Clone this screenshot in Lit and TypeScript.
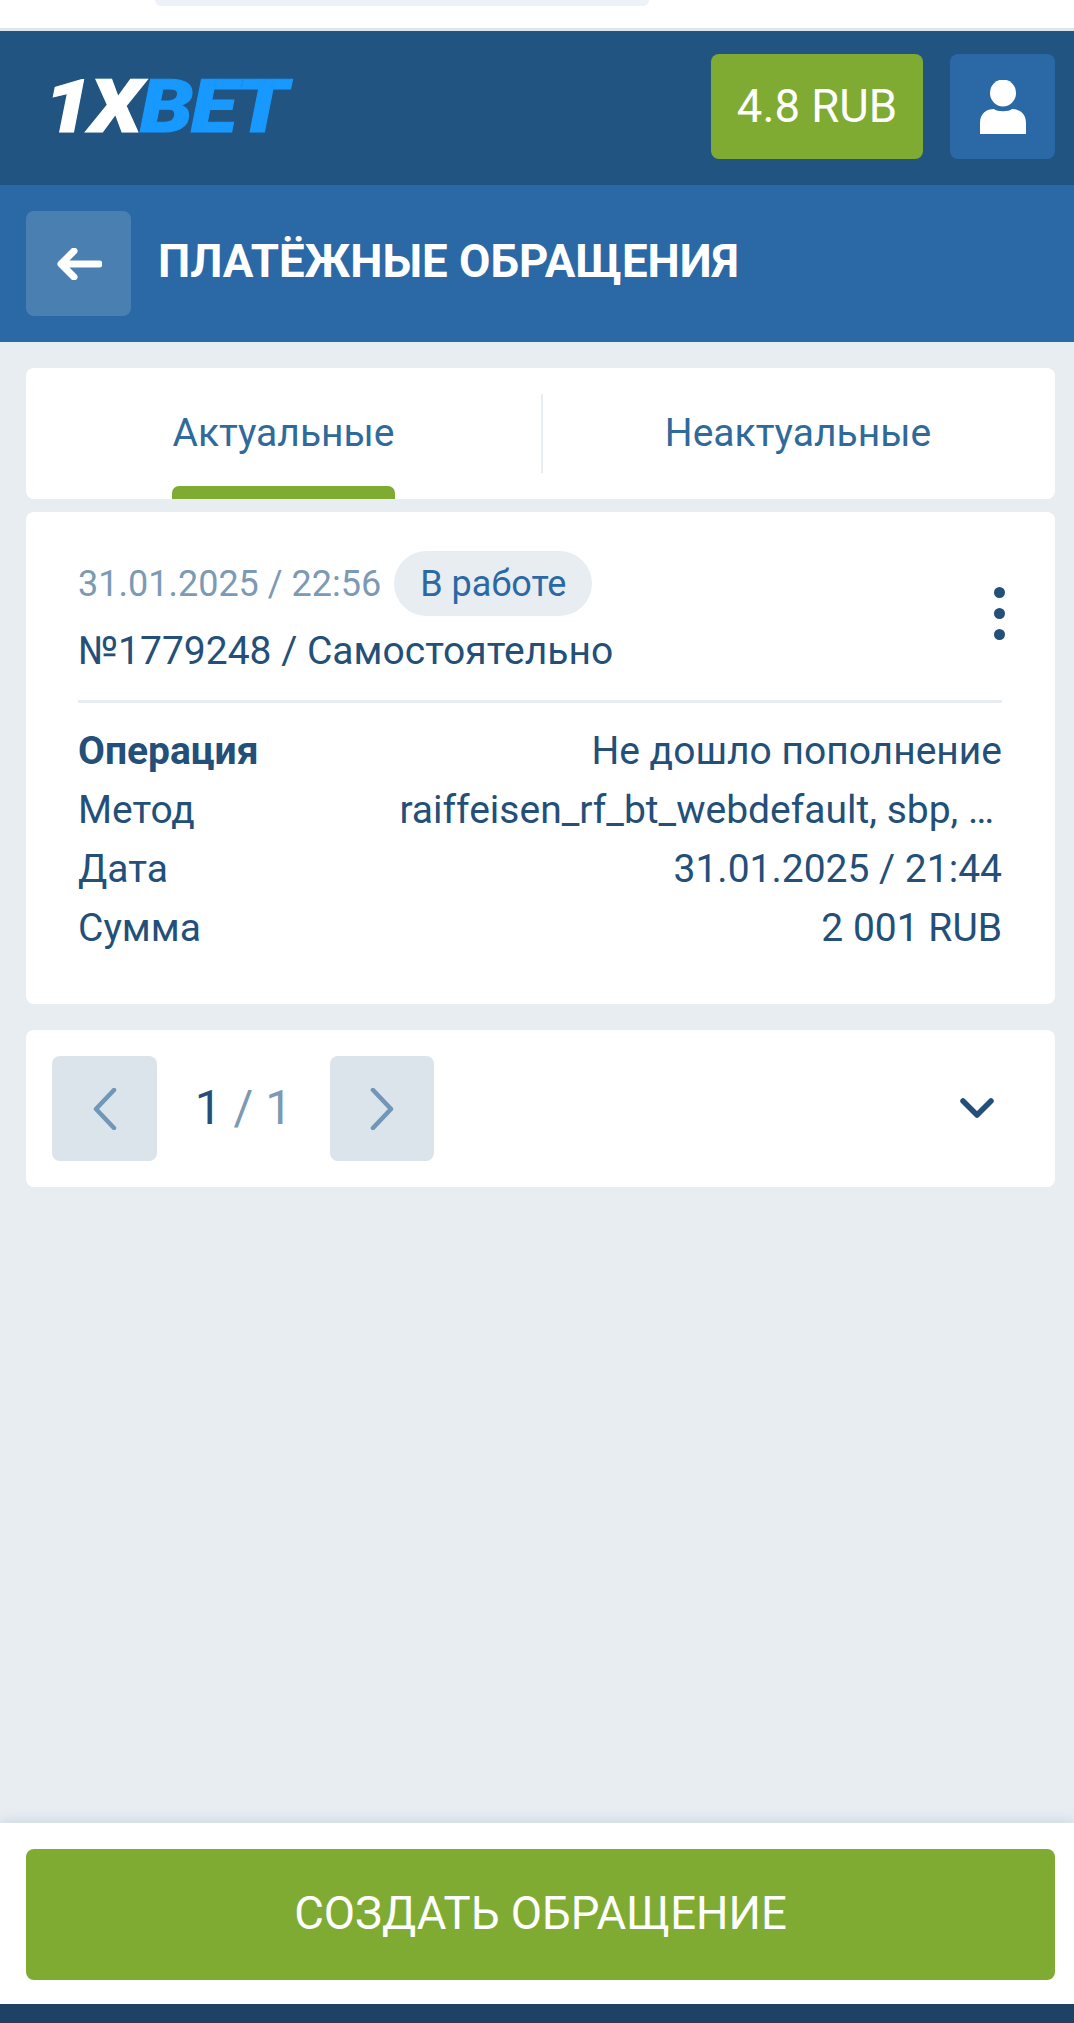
import { css, html, LitElement } from "lit";
import { customElement } from "lit/decorators.js";

@customElement("app-root")
class AppRoot extends LitElement {
    render() {
        return html`
      <div class="status"><span class="url-pill"></span></div>
      <header class="top">
        <div class="logo"><span class="logo-white">1X</span><span class="logo-blue">BET</span></div>
        <div class="balance">4.8 RUB</div>
        <button class="user" aria-label="Профиль">
          <svg width="48" height="54" viewBox="0 0 48 54">
            <ellipse cx="24" cy="13" rx="13" ry="13.5" fill="#fff" />
            <path d="M1 54V43C1 33 8 29 15 29C18 32 30 32 33 29C40 29 47 33 47 43V54Z" fill="#fff" />
          </svg>
        </button>
      </header>
      <div class="title-bar">
        <button class="back" aria-label="Назад">
          <svg width="46" height="32" viewBox="0 0 46 32">
            <path d="M18 3L5 16L18 29M6 16H43" fill="none" stroke="#fff" stroke-width="7" stroke-linecap="round" stroke-linejoin="round" />
          </svg>
        </button>
        <h1>ПЛАТЁЖНЫЕ ОБРАЩЕНИЯ</h1>
      </div>
      <main>
        <nav class="card tabs">
          <a class="tab active"><span>Актуальные</span></a>
          <i class="tab-line"></i>
          <a class="tab"><span>Неактуальные</span></a>
        </nav>
        <section class="card ticket">
          <div class="ticket-head">
            <div>
              <div class="meta">
                <span class="date">31.01.2025 / 22:56</span>
                <span class="badge">В работе</span>
              </div>
              <div class="number">№1779248 / Самостоятельно</div>
            </div>
            <div class="dots"><i></i><i></i><i></i></div>
          </div>
          <dl>
            <div><dt class="strong">Операция</dt><dd>Не дошло пополнение</dd></div>
            <div><dt>Метод</dt><dd class="method">raiffeisen_rf_bt_webdefault, sbp, …</dd></div>
            <div><dt>Дата</dt><dd>31.01.2025 / 21:44</dd></div>
            <div><dt>Сумма</dt><dd>2 001 RUB</dd></div>
          </dl>
        </section>
        <section class="card pager">
          <button class="page-btn" aria-label="Назад">
            <svg width="24" height="42" viewBox="0 0 24 42"><path d="M21 2L3 21L21 40" fill="none" stroke="#7096b8" stroke-width="4.5" stroke-linecap="round" stroke-linejoin="round" /></svg>
          </button>
          <div class="pages"><span class="cur">1</span><span class="total"> / 1</span></div>
          <button class="page-btn" aria-label="Вперёд">
            <svg width="24" height="42" viewBox="0 0 24 42"><path d="M3 2L21 21L3 40" fill="none" stroke="#7096b8" stroke-width="4.5" stroke-linecap="round" stroke-linejoin="round" /></svg>
          </button>
          <svg class="chevron" width="34" height="21" viewBox="0 0 34 21"><path d="M3 3L17 17L31 3" fill="none" stroke="#234f78" stroke-width="5.5" stroke-linecap="round" stroke-linejoin="round" /></svg>
        </section>
      </main>
      <footer>
        <button class="create">СОЗДАТЬ ОБРАЩЕНИЕ</button>
      </footer>
      <div class="bottom"></div>
    `;
    }

    static styles = css`
    :host {
        display: flex;
        flex-direction: column;
        min-height: 100vh;
        background: #e8edf2;
        font-family: Roboto, "Liberation Sans", sans-serif;
        color: #234f78;
    }
    button {
        border: 0;
        padding: 0;
        font-family: inherit;
        display: flex;
        align-items: center;
        justify-content: center;
    }
    .status {
        height: 28px;
        background: #fff;
        border-bottom: 3px solid #dde5ec;
        display: flex;
        align-items: flex-start;
        justify-content: center;
        padding-right: 270px;
    }
    .url-pill {
        width: 494px;
        height: 6px;
        background: #edf1f8;
        border-radius: 0 0 20px 20px;
    }
    .top {
        height: 154px;
        box-sizing: border-box;
        background: #225481;
        display: flex;
        align-items: center;
        padding: 0 19px 3px 44px;
    }
    .logo {
        font-size: 74px;
        font-weight: 900;
        font-style: italic;
        line-height: 1;
        letter-spacing: -2px;
        margin-right: auto;
        transform: scaleX(1.15);
        transform-origin: left center;
        -webkit-text-stroke: 1px currentColor;
    }
    .logo-white {
        color: #fff;
    }
    .logo-blue {
        color: #1799ff;
    }
    .balance {
        width: 212px;
        height: 105px;
        background: #7fab32;
        border-radius: 8px;
        color: #fff;
        font-size: 45.5px;
        display: flex;
        align-items: center;
        justify-content: center;
    }
    .user {
        width: 105px;
        height: 105px;
        margin-left: 27px;
        background: #2a69a5;
        border-radius: 8px;
    }
    .title-bar {
        height: 157px;
        background: #2a69a5;
        display: flex;
        align-items: center;
        padding-left: 26px;
        gap: 27px;
    }
    .back {
        width: 105px;
        height: 105px;
        background: #4a7fb2;
        border-radius: 8px;
    }
    h1 {
        margin: 0 0 5px;
        color: #fff;
        font-size: 45.6px;
        font-weight: 700;
    }
    main {
        flex: 1;
        padding: 26px 19px 0 26px;
        display: flex;
        flex-direction: column;
    }
    .card {
        background: #fff;
        border-radius: 8px;
    }
    .tabs {
        height: 131px;
        display: flex;
        align-items: flex-start;
        overflow: hidden;
    }
    .tab {
        flex: 1;
        height: 131px;
        display: flex;
        justify-content: center;
        color: #2f6a9b;
        font-size: 39px;
    }
    .tab.active {
        flex: 0 0 515px;
    }
    .tab:last-child {
        padding-right: 2px;
    }
    .tab span {
        height: 131px;
        box-sizing: border-box;
        padding-top: 40px;
        line-height: 50px;
        display: flex;
        flex-direction: column;
    }
    .tab.active span::after {
        content: "";
        margin-top: auto;
        height: 13px;
        background: #7fab32;
        border-radius: 7px 7px 0 0;
    }
    .tab-line {
        width: 2px;
        height: 79px;
        margin-top: 26px;
        background: #e8edf2;
    }
    .ticket {
        margin-top: 13px;
        height: 492px;
        box-sizing: border-box;
        padding: 39px 53px 0 52px;
    }
    .ticket-head {
        display: flex;
        justify-content: space-between;
        align-items: flex-start;
        height: 149px;
        border-bottom: 3px solid #e8edf2;
    }
    .meta {
        display: flex;
        align-items: center;
        gap: 13px;
    }
    .date {
        color: #7c9ab3;
        font-size: 36px;
    }
    .badge {
        height: 65px;
        padding: 0 26px;
        border-radius: 33px;
        background: #e8edf2;
        color: #2a69a5;
        font-size: 36px;
        line-height: 66px;
    }
    .number {
        margin-top: 10px;
        font-size: 39px;
        line-height: 50px;
    }
    .dots {
        display: flex;
        flex-direction: column;
        gap: 10px;
        margin-top: 36px;
        margin-right: -3px;
    }
    .dots i {
        width: 11px;
        height: 11px;
        border-radius: 50%;
        background: #234f78;
    }
    dl {
        margin: 19px 0 0;
        font-size: 39px;
        line-height: 59px;
    }
    dl div {
        display: flex;
        justify-content: space-between;
    }
    dt.strong {
        font-weight: 700;
    }
    dd {
        margin: 0;
    }
    .method {
        padding-right: 8px;
    }
    .pager {
        margin-top: 26px;
        height: 157px;
        box-sizing: border-box;
        padding: 0 61px 0 26px;
        display: flex;
        align-items: center;
    }
    .page-btn {
        width: 105px;
        height: 105px;
        background: #dbe3eb;
        border-radius: 8px;
    }
    .page-btn:last-of-type {
        width: 104px;
    }
    .pages {
        width: 173px;
        margin-bottom: 3px;
        text-align: center;
        font-size: 48px;
    }
    .total {
        color: #7c9ab3;
    }
    .chevron {
        margin-left: auto;
    }
    footer {
        height: 181px;
        box-sizing: border-box;
        background: #fff;
        padding: 26px 19px 0 26px;
        box-shadow: 0 -2px 12px rgba(80, 110, 140, 0.18);
    }
    .create {
        width: 100%;
        height: 131px;
        padding-bottom: 3px;
        background: #7fab32;
        border-radius: 8px;
        color: #fff;
        font-size: 45.5px;
    }
    .bottom {
        height: 19px;
        background: #1f4164;
    }
  `;
}
